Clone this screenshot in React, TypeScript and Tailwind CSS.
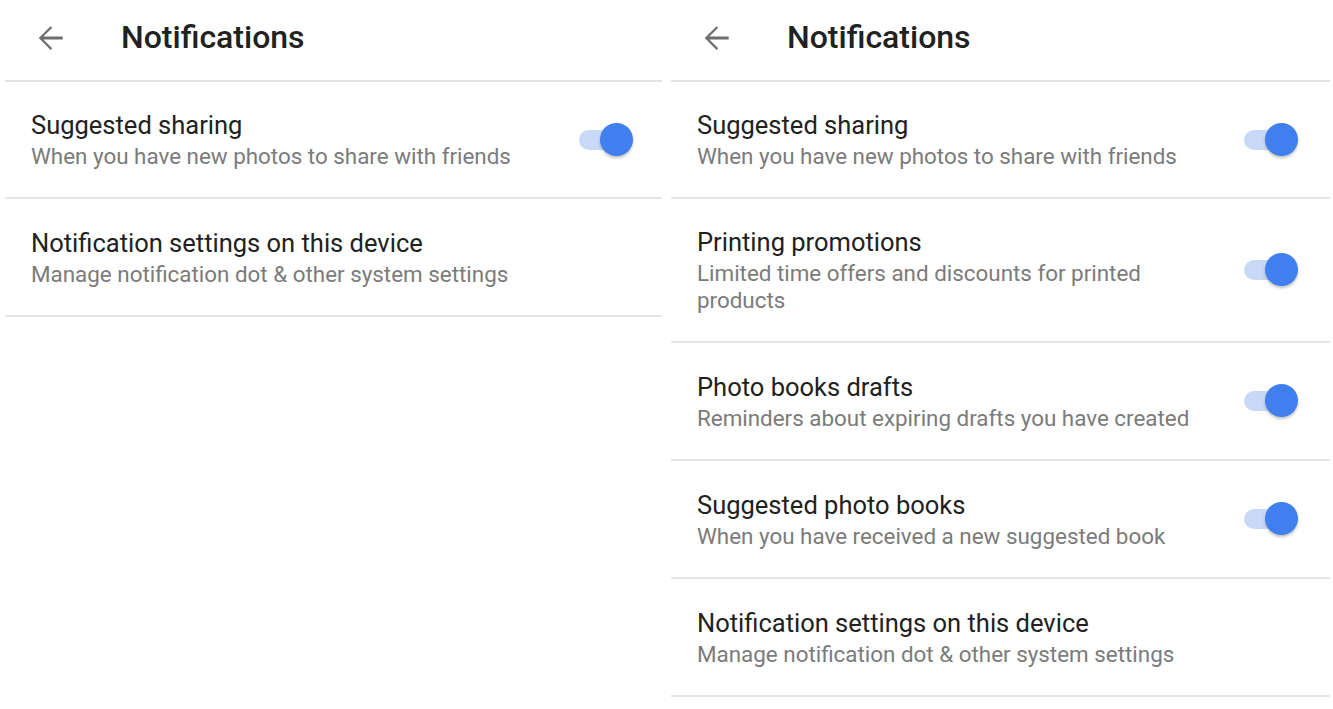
import React from "react";

type Item = { title: string; sub: string; toggle?: boolean; h: string };

const leftItems: Item[] = [
  { title: "Suggested sharing", sub: "When you have new photos to share with friends", toggle: true, h: "h-[117px]" },
  { title: "Notification settings on this device", sub: "Manage notification dot & other system settings", h: "h-[118px]" },
];

const rightItems: Item[] = [
  { title: "Suggested sharing", sub: "When you have new photos to share with friends", toggle: true, h: "h-[117px]" },
  { title: "Printing promotions", sub: "Limited time offers and discounts for printed products", toggle: true, h: "h-[144px]" },
  { title: "Photo books drafts", sub: "Reminders about expiring drafts you have created", toggle: true, h: "h-[118px]" },
  { title: "Suggested photo books", sub: "When you have received a new suggested book", toggle: true, h: "h-[118px]" },
  { title: "Notification settings on this device", sub: "Manage notification dot & other system settings", h: "h-[118px]" },
];

function BackArrow() {
  return (
    <svg width="38" height="38" viewBox="0 0 24 24" className="text-[#6e6e6e]">
      <path d="M20 11.1H7.83l5.59-5.59L12.4 4.5 4.9 12l7.5 7.5 1.02-1.01-5.59-5.59H20z" fill="currentColor" />
    </svg>
  );
}

function Toggle() {
  return (
    <div className="relative w-[54px] h-[34px] flex items-center">
      <div className="w-[46px] h-[20px] rounded-full bg-[#c8d9f8]" />
      <div className="absolute right-0 top-0 w-[33px] h-[33px] rounded-full bg-[#3f80ee] shadow-[0_2px_3px_rgba(0,0,0,0.25)]" />
    </div>
  );
}

function Panel({ items, w, pr }: { items: Item[]; w: string; pr: string }) {
  return (
    <div className={`${w} shrink-0`}>
      <div className="h-[82px] flex items-center pb-[6px] border-b-2 border-[#e3e3e3]">
        <div className="pl-[26px] w-[116px] pt-[1px]">
          <BackArrow />
        </div>
        <h1 className="text-[32px] font-medium text-[#212121] leading-none">Notifications</h1>
      </div>
      {items.map((it) => (
        <div key={it.title} className={`${it.h} flex items-center border-b-2 border-[#e6e6e6] pl-[26px] ${pr}`}>
          <div className="flex-1 pr-[44px]">
            <div className="text-[25.5px] leading-[32px] text-[#212121]">{it.title}</div>
            <div className="text-[22.4px] leading-[27px] mt-[2px] text-[#7b7b7b]">{it.sub}</div>
          </div>
          {it.toggle && <Toggle />}
        </div>
      ))}
    </div>
  );
}

export default function App() {
  return (
    <div className="w-[1333px] h-[709px] bg-white flex gap-[9px] pl-[5px] overflow-hidden" style={{ fontFamily: "Roboto, 'Noto Sans', sans-serif" }}>
      <Panel items={leftItems} w="w-[657px]" pr="pr-[29px]" />
      <Panel items={rightItems} w="w-[659px]" pr="pr-[32px]" />
    </div>
  );
}
